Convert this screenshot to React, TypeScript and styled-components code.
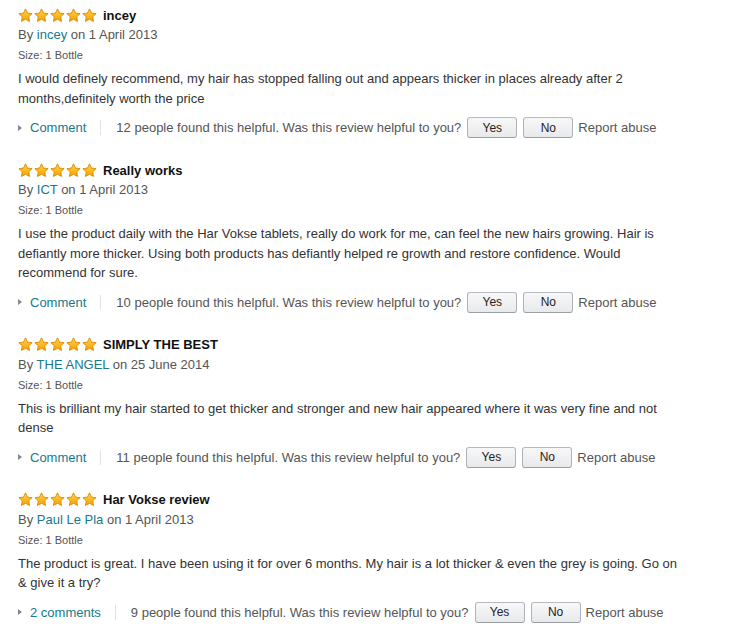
import React from "react";
import styled, { createGlobalStyle } from "styled-components";

const GlobalStyle = createGlobalStyle`
  body {
    margin: 0;
    background: #fff;
    font-family: "Liberation Sans", Arial, sans-serif;
  }
`;

const Page = styled.div`
  padding: 6px 0 0 18px;
`;

const ReviewBox = styled.div`
  margin-bottom: 23px;
`;

const Header = styled.div`
  display: flex;
  align-items: center;
  height: 18px;
`;

const Stars = styled.span`
  display: flex;
  gap: 1px;
  margin-right: 6px;
`;

const Title = styled.span`
  font-size: 13px;
  font-weight: bold;
  color: #111;
`;

const Byline = styled.div`
  font-size: 13px;
  line-height: 20px;
  color: #555;
  margin-top: 1px;
`;

const Link = styled.a`
  color: #16798d;
  text-decoration: none;
`;

const Size = styled.div`
  font-size: 11px;
  line-height: 20px;
  color: #555;
`;

const Body = styled.p`
  margin: 4px 0 0;
  max-width: 664px;
  font-size: 13px;
  line-height: 19.5px;
  color: #333;
`;

const Actions = styled.div`
  display: flex;
  align-items: center;
  height: 21px;
  margin-top: 9px;
  font-size: 13px;
  color: #555;
`;

const Arrow = styled.span`
  width: 0;
  height: 0;
  border-top: 3.5px solid transparent;
  border-bottom: 3.5px solid transparent;
  border-left: 4px solid #888;
  margin-right: 8px;
`;

const Divider = styled.span`
  width: 1px;
  height: 15px;
  background: #e3e3e3;
  margin: 0 15px 0 14px;
`;

const VoteButton = styled.button`
  width: 50px;
  height: 21px;
  margin-left: 6px;
  padding: 0;
  font-family: "Liberation Sans", Arial, sans-serif;
  font-size: 12px;
  color: #222;
  background: linear-gradient(#f8f8f9, #e8e9eb);
  border: 1px solid #adb1b8;
  border-color: #b6b9bf #adb1b8 #9a9ea5;
  border-radius: 3px;
`;

const Report = styled.span`
  margin-left: 5px;
`;

function Star() {
  return (
    <svg width="15" height="15" viewBox="0 0 20 20">
      <defs>
        <linearGradient id="starfill" x1="0" y1="0" x2="0" y2="1">
          <stop offset="0" stopColor="#ffd54a" />
          <stop offset="1" stopColor="#f5a000" />
        </linearGradient>
      </defs>
      <path
        d="M10 1.2l2.7 5.6 6.1.8-4.5 4.2 1.1 6.1L10 15l-5.4 2.9 1.1-6.1L1.2 7.6l6.1-.8z"
        fill="url(#starfill)"
        stroke="#d98a00"
        strokeWidth="1.2"
        strokeLinejoin="round"
      />
    </svg>
  );
}

interface Review {
  title: string;
  author: string;
  date: string;
  text: string;
  comments: string;
  helpful: number;
}

const reviews: Review[] = [
  {
    title: "incey",
    author: "incey",
    date: "1 April 2013",
    text: "I would definely recommend, my hair has stopped falling out and appears thicker in places already after 2 months,definitely worth the price",
    comments: "Comment",
    helpful: 12,
  },
  {
    title: "Really works",
    author: "ICT",
    date: "1 April 2013",
    text: "I use the product daily with the Har Vokse tablets, really do work for me, can feel the new hairs growing. Hair is defiantly more thicker. Using both products has defiantly helped re growth and restore confidence. Would recommend for sure.",
    comments: "Comment",
    helpful: 10,
  },
  {
    title: "SIMPLY THE BEST",
    author: "THE ANGEL",
    date: "25 June 2014",
    text: "This is brilliant my hair started to get thicker and stronger and new hair appeared where it was very fine and not dense",
    comments: "Comment",
    helpful: 11,
  },
  {
    title: "Har Vokse review",
    author: "Paul Le Pla",
    date: "1 April 2013",
    text: "The product is great. I have been using it for over 6 months. My hair is a lot thicker & even the grey is going. Go on & give it a try?",
    comments: "2 comments",
    helpful: 9,
  },
];

function ReviewItem({ review }: { review: Review }) {
  return (
    <ReviewBox>
      <Header>
        <Stars>
          {[0, 1, 2, 3, 4].map(i => (
            <Star key={i} />
          ))}
        </Stars>
        <Title>{review.title}</Title>
      </Header>
      <Byline>
        By <Link href="#">{review.author}</Link> on {review.date}
      </Byline>
      <Size>Size: 1 Bottle</Size>
      <Body>{review.text}</Body>
      <Actions>
        <Arrow />
        <Link href="#">{review.comments}</Link>
        <Divider />
        <span>
          {review.helpful} people found this helpful. Was this review helpful
          to you?
        </span>
        <VoteButton>Yes</VoteButton>
        <VoteButton>No</VoteButton>
        <Report>Report abuse</Report>
      </Actions>
    </ReviewBox>
  );
}

export default function App() {
  return (
    <Page>
      <GlobalStyle />
      {reviews.map(r => (
        <ReviewItem key={r.title} review={r} />
      ))}
    </Page>
  );
}
